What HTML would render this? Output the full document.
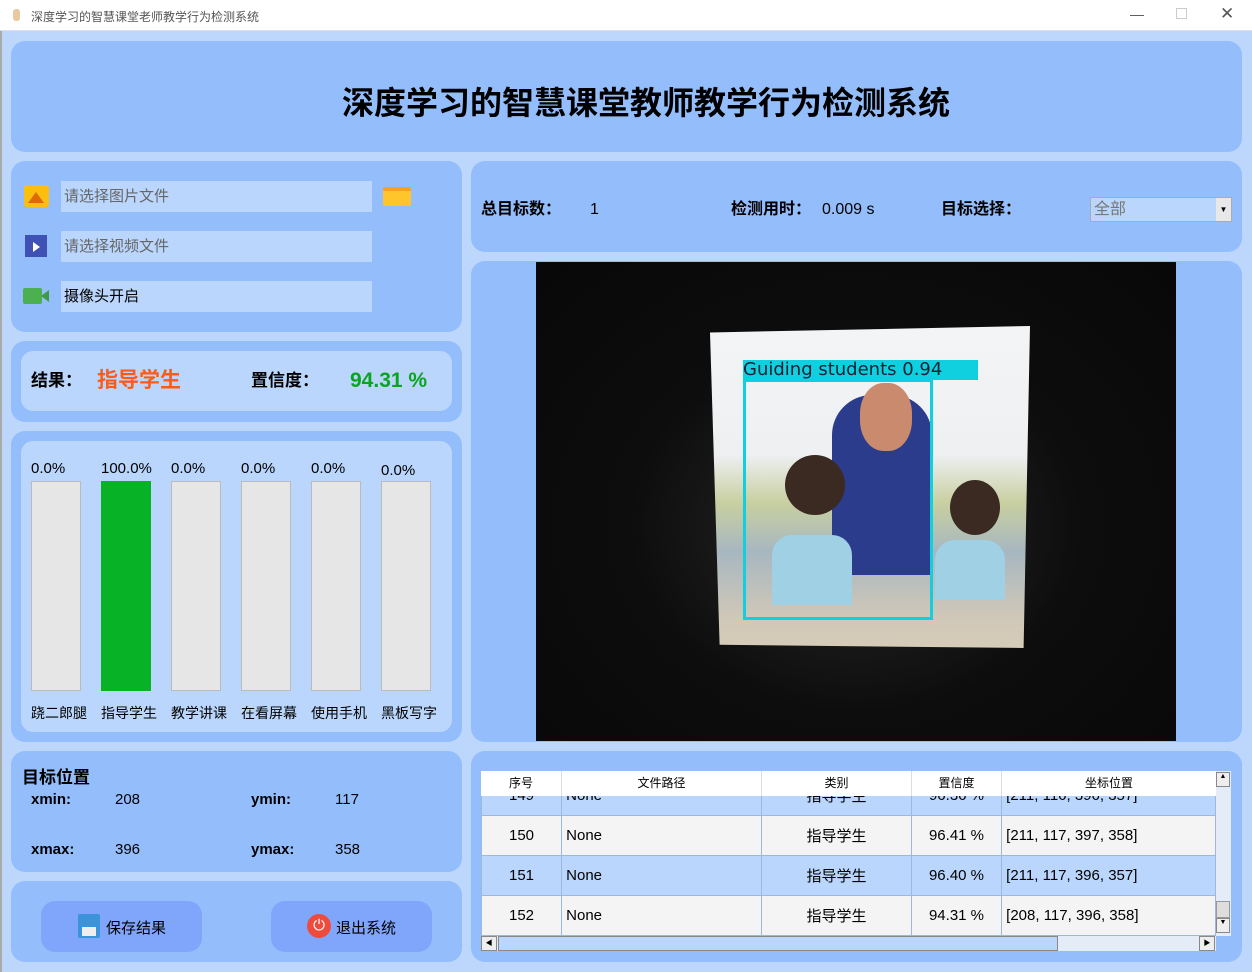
<!DOCTYPE html>
<html><head><meta charset="utf-8"><style>
*{margin:0;padding:0;box-sizing:border-box}
body{width:1252px;height:972px;background:#bcd6fc;font-family:"Liberation Sans","Noto Sans CJK SC",sans-serif;position:relative;overflow:hidden;color:#000}
.a{position:absolute}
.p{position:absolute;background:#94bdfc;border-radius:14px}
.in{position:absolute;background:#bad6fc;font-size:15px;line-height:31px;padding-left:3px;color:#666}
.b{font-weight:bold}
.bar{position:absolute;width:50px;height:210px;top:481px;background:#e6e6e6;border:1px solid #bbb}
.bl{position:absolute;top:460px;font-size:15px}
.bn{position:absolute;top:703px;font-size:14px}
table{border-collapse:collapse;font-size:15px}
td{border:1px solid #9db8e0;height:40px;padding:0}
.t{line-height:20px;height:20px}
</style></head><body>
<div class="a" style="left:0;top:0;width:1252px;height:31px;background:#fff;border-bottom:1px solid #dde"></div>
<div class="a" style="left:13px;top:9px;width:7px;height:12px;background:#e8c9a0;border-radius:3px"></div>
<div class="a" style="left:31px;top:8px;font-size:12px;color:#555">深度学习的智慧课堂老师教学行为检测系统</div>
<div class="a" style="left:1130px;top:6px;font-size:14px;color:#555">—</div>
<div class="a" style="left:1176px;top:8px;width:11px;height:11px;border:1px solid #ccc"></div>
<div class="a" style="left:1220px;top:4px;font-size:17px;color:#555">✕</div>
<div class="a" style="left:0;top:31px;width:2px;height:941px;background:#aaa"></div>

<div class="p" style="left:11px;top:41px;width:1231px;height:111px"></div>
<div class="a b" style="left:0;width:1292px;top:78px;text-align:center;font-size:32px">深度学习的智慧课堂教师教学行为检测系统</div>

<div class="p" style="left:11px;top:161px;width:451px;height:171px"></div>
<div class="a" style="left:24px;top:185px;width:25px;height:22px;background:#fbbf0f;border-radius:3px"></div>
<div class="a" style="left:28px;top:192px;width:0;height:0;border-left:8px solid transparent;border-right:8px solid transparent;border-bottom:11px solid #e06a00"></div>
<div class="in" style="left:61px;top:181px;width:311px">请选择图片文件</div>
<div class="a" style="left:383px;top:187px;width:28px;height:19px;background:#ffc52a;border-radius:2px;border-top:4px solid #f9a11a"></div>
<div class="a" style="left:25px;top:235px;width:22px;height:22px;background:#3f51b5"></div>
<div class="a" style="left:33px;top:242px;width:0;height:0;border-top:5px solid transparent;border-bottom:5px solid transparent;border-left:7px solid #fff"></div>
<div class="in" style="left:61px;top:231px;width:311px">请选择视频文件</div>
<div class="a" style="left:23px;top:288px;width:19px;height:16px;background:#4caf50;border-radius:2px"></div>
<div class="a" style="left:41px;top:290px;width:0;height:0;border-top:6px solid transparent;border-bottom:6px solid transparent;border-right:8px solid #3e9b43"></div>
<div class="in" style="left:61px;top:281px;width:311px;color:#000">摄像头开启</div>

<div class="p" style="left:11px;top:341px;width:451px;height:81px"></div>
<div class="a" style="left:21px;top:351px;width:431px;height:60px;background:#bad6fc;border-radius:12px"></div>
<div class="a b t" style="left:31px;top:371px;font-size:17px">结果：</div>
<div class="a b t" style="left:97px;top:371px;font-size:21px;color:#ff5a17">指导学生</div>
<div class="a b t" style="left:251px;top:371px;font-size:17px">置信度：</div>
<div class="a b t" style="left:350px;top:371px;font-size:21px;color:#0aa51e">94.31 %</div>

<div class="p" style="left:11px;top:431px;width:451px;height:311px"></div>
<div class="a" style="left:21px;top:441px;width:431px;height:291px;background:#bad6fc;border-radius:12px"></div>
<div class="bar" style="left:31px"></div><div class="bar" style="left:101px;background:#07b226;border-color:#07b226"></div>
<div class="bar" style="left:171px"></div><div class="bar" style="left:241px"></div><div class="bar" style="left:311px"></div><div class="bar" style="left:381px"></div>
<div class="bl" style="left:31px">0.0%</div><div class="bl" style="left:101px">100.0%</div><div class="bl" style="left:171px">0.0%</div><div class="bl" style="left:241px">0.0%</div><div class="bl" style="left:311px">0.0%</div><div class="bl" style="left:381px;top:462px">0.0%</div>
<div class="bn" style="left:31px">跷二郎腿</div><div class="bn" style="left:101px">指导学生</div><div class="bn" style="left:171px">教学讲课</div><div class="bn" style="left:241px">在看屏幕</div><div class="bn" style="left:311px">使用手机</div><div class="bn" style="left:381px">黑板写字</div>

<div class="p" style="left:11px;top:751px;width:451px;height:121px"></div>
<div class="a b" style="left:22px;top:763px;font-size:17px">目标位置</div>
<div class="a b" style="left:31px;top:791px;font-size:15px">xmin:</div><div class="a" style="left:115px;top:791px;font-size:15px">208</div>
<div class="a b" style="left:251px;top:791px;font-size:15px">ymin:</div><div class="a" style="left:335px;top:791px;font-size:15px">117</div>
<div class="a b" style="left:31px;top:841px;font-size:15px">xmax:</div><div class="a" style="left:115px;top:841px;font-size:15px">396</div>
<div class="a b" style="left:251px;top:841px;font-size:15px">ymax:</div><div class="a" style="left:335px;top:841px;font-size:15px">358</div>

<div class="p" style="left:11px;top:881px;width:451px;height:81px"></div>
<div class="a" style="left:41px;top:901px;width:161px;height:51px;background:#80a6fb;border-radius:14px"></div>
<div class="a" style="left:78px;top:914px;width:22px;height:24px;background:#3b94d9;border-radius:2px"></div>
<div class="a" style="left:82px;top:927px;width:14px;height:9px;background:#eee"></div>
<div class="a" style="left:106px;top:917px;font-size:15px">保存结果</div>
<div class="a" style="left:271px;top:901px;width:161px;height:51px;background:#80a6fb;border-radius:14px"></div>
<div class="a" style="left:307px;top:914px;width:24px;height:24px;background:#ef4b3d;border-radius:50%;color:#fff;font-size:15px;text-align:center;line-height:24px">⏻</div>
<div class="a" style="left:336px;top:917px;font-size:15px">退出系统</div>

<div class="p" style="left:471px;top:161px;width:771px;height:91px"></div>
<div class="a b t" style="left:481px;top:200px;font-size:16px">总目标数：</div>
<div class="a t" style="left:590px;top:200px;font-size:16px">1</div>
<div class="a b t" style="left:731px;top:200px;font-size:16px">检测用时：</div>
<div class="a t" style="left:822px;top:200px;font-size:16px">0.009 s</div>
<div class="a b t" style="left:941px;top:200px;font-size:16px">目标选择：</div>
<div class="a" style="left:1090px;top:197px;width:142px;height:25px;background:#bad6fc;border:1px solid #aab;font-size:16px;color:#777;padding-left:3px;line-height:23px">全部</div>
<div class="a" style="left:1216px;top:198px;width:15px;height:23px;background:#e8e8e8;font-size:8px;text-align:center;line-height:23px">▼</div>

<div class="p" style="left:471px;top:261px;width:771px;height:481px"></div>
<div class="a" style="left:536px;top:262px;width:640px;height:479px;background:radial-gradient(ellipse at 50% 55%,#2a2a2a 0%,#0d0d0d 50%,#080808 100%)"></div>
<div class="a" style="left:710px;top:326px;width:320px;height:322px;background:linear-gradient(180deg,#f2f4f6 0%,#eef0f2 40%,#c8cfa0 55%,#a7b7c0 70%,#cfc7b8 90%,#d6ccb8 100%);clip-path:polygon(0 2%,100% 0,98% 100%,3% 99%)"></div>
<div class="a" style="left:832px;top:395px;width:100px;height:180px;background:#2b3c8c;border-radius:40px 40px 0 0"></div>
<div class="a" style="left:860px;top:383px;width:52px;height:68px;background:#c98a6e;border-radius:45%"></div>
<div class="a" style="left:785px;top:455px;width:60px;height:60px;background:#3b2a22;border-radius:50%"></div>
<div class="a" style="left:772px;top:535px;width:80px;height:70px;background:#9fd0e4;border-radius:20px 20px 0 0"></div>
<div class="a" style="left:950px;top:480px;width:50px;height:55px;background:#3a2a22;border-radius:50%"></div>
<div class="a" style="left:935px;top:540px;width:70px;height:60px;background:#9fd0e4;border-radius:20px 20px 0 0"></div>
<div class="a" style="left:743px;top:379px;width:190px;height:241px;border:3px solid #10d0e0"></div>
<div class="a" style="left:743px;top:360px;width:235px;height:20px;background:#10d0e0;font-family:'DejaVu Sans',sans-serif;font-size:18px;line-height:20px;color:#123">Guiding students 0.94</div>

<div class="p" style="left:471px;top:751px;width:771px;height:211px"></div>
<div class="a" style="left:481px;top:771px;width:735px;height:165px;overflow:hidden;background:#f4f4f4">
<table style="position:absolute;top:4px;left:0;width:735px">
<tr style="background:#bad6fc"><td style="width:80px;text-align:center">149</td><td style="width:200px">&nbsp;None</td><td style="width:150px;text-align:center">指导学生</td><td style="width:90px;text-align:center">96.36 %</td><td>&nbsp;[211, 116, 396, 357]</td></tr>
<tr><td style="text-align:center">150</td><td>&nbsp;None</td><td style="text-align:center">指导学生</td><td style="text-align:center">96.41 %</td><td>&nbsp;[211, 117, 397, 358]</td></tr>
<tr style="background:#bad6fc"><td style="text-align:center">151</td><td>&nbsp;None</td><td style="text-align:center">指导学生</td><td style="text-align:center">96.40 %</td><td>&nbsp;[211, 117, 396, 357]</td></tr>
<tr><td style="text-align:center">152</td><td>&nbsp;None</td><td style="text-align:center">指导学生</td><td style="text-align:center">94.31 %</td><td>&nbsp;[208, 117, 396, 358]</td></tr>
</table>
<div class="a" style="left:0;top:0;width:735px;height:25px;background:#fff;font-size:12px;line-height:25px">
<span class="a" style="left:0;width:80px;text-align:center">序号</span><span class="a" style="left:80px;width:200px;text-align:center;border-left:1px solid #ddd">文件路径</span><span class="a" style="left:280px;width:150px;text-align:center;border-left:1px solid #ddd">类别</span><span class="a" style="left:430px;width:90px;text-align:center;border-left:1px solid #ddd">置信度</span><span class="a" style="left:520px;width:215px;text-align:center;border-left:1px solid #ddd">坐标位置</span></div>
</div>
<div class="a" style="left:1216px;top:771px;width:15px;height:165px;background:#e4ecf8"></div>
<div class="a" style="left:1216px;top:772px;width:14px;height:15px;background:#eee;border:1px solid #888;font-size:7px;text-align:center">▲</div>
<div class="a" style="left:1216px;top:901px;width:14px;height:17px;background:#ddd;border:1px solid #999"></div>
<div class="a" style="left:1216px;top:918px;width:14px;height:15px;background:#eee;border:1px solid #888;font-size:7px;text-align:center">▼</div>
<div class="a" style="left:481px;top:936px;width:735px;height:15px;background:#e4ecf8"></div>
<div class="a" style="left:481px;top:936px;width:16px;height:15px;background:#eee;border:1px solid #888;font-size:7px;text-align:center;line-height:13px">◀</div>
<div class="a" style="left:498px;top:936px;width:560px;height:15px;background:#bad6fc;border:1px solid #888"></div>
<div class="a" style="left:1199px;top:936px;width:16px;height:15px;background:#eee;border:1px solid #888;font-size:7px;text-align:center;line-height:13px">▶</div>
</body></html>
